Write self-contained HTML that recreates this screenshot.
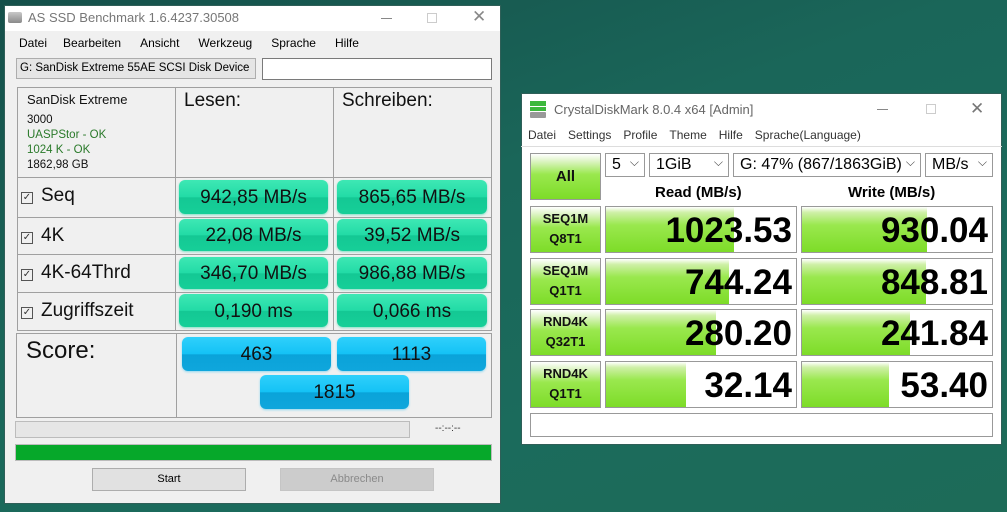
<!DOCTYPE html>
<html><head><meta charset="utf-8"><style>
*{margin:0;padding:0;box-sizing:border-box}
body{width:1007px;height:512px;overflow:hidden;position:relative;font-family:"Liberation Sans",sans-serif;background:linear-gradient(160deg,#15504a 0%,#1a6659 40%,#1b6b5c 70%,#1d6b58 100%)}
.a{position:absolute}
.t{white-space:nowrap}
.cell{position:absolute;border:1px solid #a0a0a0}
.gp{position:absolute;border-radius:6px;background:linear-gradient(#3ee8b4 0%,#22dba6 50%,#14c894 52%,#16cf98 100%);box-shadow:0 1px 2px #7fe0c5;font-size:19px;text-align:center;color:#111}
.bp{position:absolute;border-radius:6px;background:linear-gradient(#2fd0fb 0%,#14c2f5 50%,#0aa3d9 52%,#0fa6dc 100%);box-shadow:0 1px 2px #8fd8f0;font-size:19px;text-align:center;color:#111}
.lbl{position:absolute;font-size:19px;color:#111}
.cb{display:inline-block;width:12px;height:12px;border:1px solid #555;font-size:10px;line-height:10px;text-align:center;margin-right:8px;vertical-align:1px;color:#333}
.cg{position:absolute;border:1px solid #999;background:linear-gradient(#fff 0%,#dff5c8 15%,#9ae84e 45%,#7ddc28 100%);font-weight:bold;font-size:13px;text-align:center;color:#111}
.cr{position:absolute;border:1px solid #999;background:#fff;overflow:hidden}
.cr .f{position:absolute;left:0;top:0;bottom:0;background:linear-gradient(#fff 0%,#cff0a8 12%,#9ae84e 40%,#7ddc28 100%)}
.cr .v{position:absolute;right:4px;top:0;font-weight:bold;font-size:35px;line-height:48px;color:#000}
.sel{position:absolute;border:1px solid #999;background:#fff;font-size:16px;line-height:22px;padding-left:6px;color:#000}
.sel:after{content:"⌵";position:absolute;right:5px;top:-3px;font-size:12px;color:#444}
</style></head><body>
<div class="a" style="left:4px;top:5px;width:497px;height:499px;background:#f0f0f0;border:1px solid #2f5f58"></div>
<div class="a" style="left:5px;top:6px;width:495px;height:25px;background:#fff"></div>
<div class="a" style="left:8px;top:12px;width:14px;height:11px;background:linear-gradient(#c8c8c8,#8a8a8a);border-radius:2px"></div>
<div class="a t" style="left:28px;top:10px;font-size:13px;color:#777">AS SSD Benchmark 1.6.4237.30508</div>
<div class="a" style="left:381px;top:18px;width:11px;height:1px;background:#888"></div>
<div class="a" style="left:427px;top:13px;width:10px;height:10px;border:1px solid #ccc"></div>
<div class="a t" style="left:472px;top:7px;font-size:17px;color:#888">✕</div>
<div class="a t" style="left:19px;top:36px;font-size:12px;color:#000">Datei<span style="margin-left:16px">Bearbeiten</span><span style="margin-left:19px">Ansicht</span><span style="margin-left:19px">Werkzeug</span><span style="margin-left:19px">Sprache</span><span style="margin-left:19px">Hilfe</span></div>
<div class="a" style="left:16px;top:58px;width:240px;height:21px;border:1px solid #adadad;background:#e5e5e5"></div>
<div class="a t" style="left:20px;top:62px;font-size:11.5px;color:#000">G: SanDisk Extreme 55AE SCSI Disk Device</div>
<div class="a" style="left:240px;top:60px;font-size:10px;color:#444">⌵</div>
<div class="a" style="left:262px;top:58px;width:230px;height:22px;border:1px solid #7a7a7a;background:#fff"></div>
<div class="cell" style="left:17px;top:87px;width:159px;height:91px"></div>
<div class="cell" style="left:175px;top:87px;width:159px;height:91px"></div>
<div class="cell" style="left:333px;top:87px;width:159px;height:91px"></div>
<div class="a t" style="left:27px;top:92px;font-size:13px;color:#111">SanDisk Extreme</div>
<div class="a t" style="left:27px;top:113px;font-size:11.5px;line-height:15px;color:#111">3000<br><span style="color:#2a7a2a">UASPStor - OK</span><br><span style="color:#2a7a2a">1024 K - OK</span><br>1862,98 GB</div>
<div class="a t" style="left:184px;top:90px;font-size:19px;color:#111">Lesen:</div>
<div class="a t" style="left:342px;top:90px;font-size:19px;color:#111">Schreiben:</div>
<div class="cell" style="left:17px;top:177px;width:159px;height:41px"></div>
<div class="cell" style="left:175px;top:177px;width:159px;height:41px"></div>
<div class="cell" style="left:333px;top:177px;width:159px;height:41px"></div>
<div class="cell" style="left:17px;top:217px;width:159px;height:38px"></div>
<div class="cell" style="left:175px;top:217px;width:159px;height:38px"></div>
<div class="cell" style="left:333px;top:217px;width:159px;height:38px"></div>
<div class="cell" style="left:17px;top:254px;width:159px;height:39px"></div>
<div class="cell" style="left:175px;top:254px;width:159px;height:39px"></div>
<div class="cell" style="left:333px;top:254px;width:159px;height:39px"></div>
<div class="cell" style="left:17px;top:292px;width:159px;height:39px"></div>
<div class="cell" style="left:175px;top:292px;width:159px;height:39px"></div>
<div class="cell" style="left:333px;top:292px;width:159px;height:39px"></div>
<div class="cell" style="left:16px;top:333px;width:161px;height:85px"></div>
<div class="cell" style="left:176px;top:333px;width:316px;height:85px"></div>
<div class="lbl t" style="left:21px;top:185px"><span class="cb">✓</span>Seq</div>
<div class="lbl t" style="left:21px;top:225px"><span class="cb">✓</span>4K</div>
<div class="lbl t" style="left:21px;top:262px"><span class="cb">✓</span>4K-64Thrd</div>
<div class="lbl t" style="left:21px;top:300px"><span class="cb">✓</span>Zugriffszeit</div>
<div class="gp" style="left:179px;top:180px;width:149px;height:34px;line-height:36px">942,85 MB/s</div>
<div class="gp" style="left:337px;top:180px;width:150px;height:34px;line-height:36px">865,65 MB/s</div>
<div class="gp" style="left:179px;top:219px;width:149px;height:32px;line-height:34px">22,08 MB/s</div>
<div class="gp" style="left:337px;top:219px;width:150px;height:32px;line-height:34px">39,52 MB/s</div>
<div class="gp" style="left:179px;top:257px;width:149px;height:32px;line-height:34px">346,70 MB/s</div>
<div class="gp" style="left:337px;top:257px;width:150px;height:32px;line-height:34px">986,88 MB/s</div>
<div class="gp" style="left:179px;top:294px;width:149px;height:33px;line-height:36px">0,190 ms</div>
<div class="gp" style="left:337px;top:294px;width:150px;height:33px;line-height:36px">0,066 ms</div>
<div class="a t" style="left:26px;top:337px;font-size:24px;color:#111">Score:</div>
<div class="bp" style="left:182px;top:337px;width:149px;height:34px;line-height:36px">463</div>
<div class="bp" style="left:337px;top:337px;width:149px;height:34px;line-height:36px">1113</div>
<div class="bp" style="left:260px;top:375px;width:149px;height:34px;line-height:36px">1815</div>
<div class="a" style="left:15px;top:421px;width:395px;height:17px;border:1px solid #bcbcbc;background:#e6e6e6"></div>
<div class="a t" style="left:435px;top:423px;font-size:10px;color:#333">--:--:--</div>
<div class="a" style="left:15px;top:444px;width:477px;height:17px;border:1px solid #bcbcbc;background:#06a82a"></div>
<div class="a" style="left:92px;top:468px;width:154px;height:23px;border:1px solid #adadad;background:#e1e1e1;font-size:11px;text-align:center;line-height:21px">Start</div>
<div class="a" style="left:280px;top:468px;width:154px;height:23px;border:1px solid #c5c5c5;background:#cccccc;font-size:11px;text-align:center;line-height:21px;color:#8a8a8a">Abbrechen</div>

<div class="a" style="left:521px;top:93px;width:481px;height:352px;background:#fff;border:1px solid #2f5f58"></div>
<div class="a" style="left:530px;top:101px;width:16px;height:5px;background:#3cb83c"></div>
<div class="a" style="left:530px;top:107px;width:16px;height:4px;background:#3cb83c"></div>
<div class="a" style="left:530px;top:112px;width:16px;height:6px;background:#999;border-radius:1px"></div>
<div class="a t" style="left:554px;top:102px;font-size:13px;color:#666">CrystalDiskMark 8.0.4 x64 [Admin]</div>
<div class="a" style="left:877px;top:109px;width:11px;height:1px;background:#888"></div>
<div class="a" style="left:926px;top:104px;width:10px;height:10px;border:1px solid #ccc"></div>
<div class="a t" style="left:970px;top:99px;font-size:17px;color:#777">✕</div>
<div class="a t" style="left:528px;top:128px;font-size:12px;color:#333">Datei<span style="margin-left:12px">Settings</span><span style="margin-left:12px">Profile</span><span style="margin-left:12px">Theme</span><span style="margin-left:12px">Hilfe</span><span style="margin-left:12px">Sprache(Language)</span></div>
<div class="a" style="left:521px;top:146px;width:481px;height:1px;background:#ddd"></div>
<div class="cg" style="left:530px;top:153px;width:71px;height:47px;line-height:46px;font-size:15px">All</div>
<div class="sel" style="left:605px;top:153px;width:40px;height:24px">5</div>
<div class="sel" style="left:649px;top:153px;width:80px;height:24px">1GiB</div>
<div class="sel" style="left:733px;top:153px;width:188px;height:24px">G: 47% (867/1863GiB)</div>
<div class="sel" style="left:925px;top:153px;width:68px;height:24px">MB/s</div>
<div class="a t" style="left:655px;top:184px;font-weight:bold;font-size:15px">Read (MB/s)</div>
<div class="a t" style="left:848px;top:184px;font-weight:bold;font-size:15px">Write (MB/s)</div>

<div class="cg" style="left:530px;top:206px;width:71px;height:47px;line-height:20px;padding-top:2px">SEQ1M<br>Q8T1</div>
<div class="cr" style="left:605px;top:206px;width:192px;height:47px"><div class="f" style="width:128px"></div><div class="v">1023.53</div></div>
<div class="cr" style="left:801px;top:206px;width:192px;height:47px"><div class="f" style="width:125px"></div><div class="v">930.04</div></div>

<div class="cg" style="left:530px;top:258px;width:71px;height:47px;line-height:20px;padding-top:2px">SEQ1M<br>Q1T1</div>
<div class="cr" style="left:605px;top:258px;width:192px;height:47px"><div class="f" style="width:123px"></div><div class="v">744.24</div></div>
<div class="cr" style="left:801px;top:258px;width:192px;height:47px"><div class="f" style="width:124px"></div><div class="v">848.81</div></div>

<div class="cg" style="left:530px;top:309px;width:71px;height:47px;line-height:20px;padding-top:2px">RND4K<br>Q32T1</div>
<div class="cr" style="left:605px;top:309px;width:192px;height:47px"><div class="f" style="width:110px"></div><div class="v">280.20</div></div>
<div class="cr" style="left:801px;top:309px;width:192px;height:47px"><div class="f" style="width:108px"></div><div class="v">241.84</div></div>

<div class="cg" style="left:530px;top:361px;width:71px;height:47px;line-height:20px;padding-top:2px">RND4K<br>Q1T1</div>
<div class="cr" style="left:605px;top:361px;width:192px;height:47px"><div class="f" style="width:80px"></div><div class="v">32.14</div></div>
<div class="cr" style="left:801px;top:361px;width:192px;height:47px"><div class="f" style="width:87px"></div><div class="v">53.40</div></div>

<div class="a" style="left:530px;top:413px;width:463px;height:24px;border:1px solid #999;background:#fff"></div>
</body></html>
